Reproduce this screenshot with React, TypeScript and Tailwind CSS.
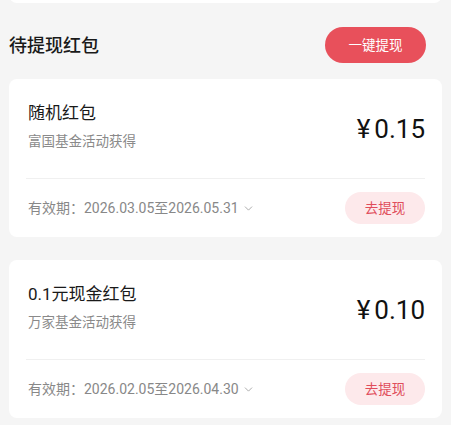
import { ChevronDown } from "lucide-react";

interface Packet {
  title: string;
  source: string;
  amount: string;
  validity: string;
}

const packets: Packet[] = [
  {
    title: "随机红包",
    source: "富国基金活动获得",
    amount: "0.15",
    validity: "有效期：2026.03.05至2026.05.31",
  },
  {
    title: "0.1元现金红包",
    source: "万家基金活动获得",
    amount: "0.10",
    validity: "有效期：2026.02.05至2026.04.30",
  },
];

const font = { fontFamily: 'Roboto, "Noto Sans CJK SC", sans-serif' };

function PacketCard({ title, source, amount, validity }: Packet) {
  return (
    <div className="rounded-lg bg-white px-[17px]">
      <div className="flex h-[100px] items-start justify-between border-b border-[#f0f0f0] pt-[22px]">
        <div className="pl-[2px]">
          <div className="text-[17px] leading-6 text-[#1a1a1a]">{title}</div>
          <div className="mt-[6px] text-[13.5px] leading-5 text-[#8a8a8a]">{source}</div>
        </div>
        <div className="mt-[12px] text-[26px] leading-8 text-[#111]">
          <span className="mr-[4px]">¥</span>
          {amount}
        </div>
      </div>
      <div className="flex h-[58px] items-center justify-between">
        <div className="flex items-center pl-[2px] text-[14px] text-[#888]">
          {validity}
          <ChevronDown className="ml-[3px] h-[13px] w-[13px] text-[#999]" strokeWidth={1.5} />
        </div>
        <button className="h-[32px] w-[80px] rounded-full bg-[#fde9eb] text-[13.5px] text-[#e04d5b]">
          去提现
        </button>
      </div>
    </div>
  );
}

export default function App() {
  return (
    <div className="min-h-[445px] bg-[#f5f5f5] px-[9px]" style={font}>
      <div className="-mt-[20px] h-[23px] rounded-b-lg bg-white" />
      <div className="flex h-[76px] items-center justify-between pt-[8px]">
        <div className="text-[18px] font-medium text-[#1a1a1a]">待提现红包</div>
        <button className="mr-[16px] h-[36px] w-[101px] rounded-full bg-[#e8505b] text-[13.5px] text-white">
          一键提现
        </button>
      </div>
      <div className="flex flex-col gap-[23px]">
        {packets.map((p) => (
          <PacketCard key={p.title} {...p} />
        ))}
      </div>
    </div>
  );
}
